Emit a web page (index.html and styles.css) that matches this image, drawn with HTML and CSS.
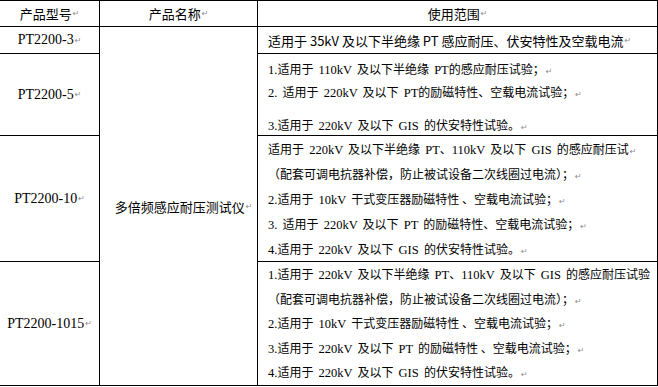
FILE: index.html
```html
<!DOCTYPE html>
<html lang="zh-CN">
<head>
<meta charset="utf-8">
<title>产品型号</title>
<link rel="stylesheet" href="styles.css">
</head>
<body>
<div class="spec">
  <div class="cell head">产品型号<span class="pm">↵</span></div>
  <div class="cell head">产品名称<span class="pm">↵</span></div>
  <div class="cell head">使用范围<span class="pm">↵</span></div>

  <div class="cell model">PT2200-3<span class="pm">↵</span></div>
  <div class="cell name">多倍频感应耐压测试仪<span class="pm">↵</span></div>
  <div class="cell uses single">适用于 35kV 及以下半绝缘 PT 感应耐压、伏安特性及空载电流<span class="pm">↵</span></div>

  <div class="cell model">PT2200-5<span class="pm">↵</span></div>
  <div class="cell uses r2">
    <div class="line"><span class="en">1.</span>适用于<span class="en"> 110kV </span>及以下半绝缘<span class="en"> PT</span>的感应耐压试验；<span class="pm">↵</span></div>
    <div class="line"><span class="en">2. </span>适用于<span class="en"> 220kV </span>及以下<span class="en"> PT</span>的励磁特性、空载电流试验；<span class="pm">↵</span></div>
    <div class="blank"></div>
    <div class="line"><span class="en">3.</span>适用于<span class="en"> 220kV </span>及以下<span class="en"> GIS </span>的伏安特性试验。<span class="pm">↵</span></div>
  </div>

  <div class="cell model">PT2200-10<span class="pm">↵</span></div>
  <div class="cell uses r3">
    <div class="line">适用于<span class="en"> 220kV </span>及以下半绝缘<span class="en"> PT</span>、<span class="en">110kV </span>及以下<span class="en"> GIS </span>的感应耐压试<span class="pm">↵</span></div>
    <div class="line">（配套可调电抗器补偿，防止被试设备二次线圈过电流）；<span class="pm">↵</span></div>
    <div class="line"><span class="en">2.</span>适用于<span class="en"> 10kV </span>干式变压器励磁特性 、空载电流试验；<span class="pm">↵</span></div>
    <div class="line"><span class="en">3. </span>适用于<span class="en"> 220kV </span>及以下<span class="en"> PT </span>的励磁特性、空载电流试验；<span class="pm">↵</span></div>
    <div class="line"><span class="en">4.</span>适用于<span class="en"> 220kV </span>及以下<span class="en"> GIS </span>的伏安特性试验。<span class="pm">↵</span></div>
  </div>

  <div class="cell model">PT2200-1015<span class="pm">↵</span></div>
  <div class="cell uses r4">
    <div class="line"><span class="en">1.</span>适用于<span class="en"> 220kV </span>及以下半绝缘<span class="en"> PT</span>、<span class="en">110kV </span>及以下<span class="en"> GIS </span>的感应耐压试验</div>
    <div class="line">（配套可调电抗器补偿，防止被试设备二次线圈过电流）；<span class="pm">↵</span></div>
    <div class="line"><span class="en">2.</span>适用于<span class="en"> 10kV </span>干式变压器励磁特性 、空载电流试验；<span class="pm">↵</span></div>
    <div class="line"><span class="en">3.</span>适用于<span class="en"> 220kV </span>及以下<span class="en"> PT </span>的励磁特性 、空载电流试验；<span class="pm">↵</span></div>
    <div class="line"><span class="en">4.</span>适用于<span class="en"> 220kV </span>及以下<span class="en"> GIS </span>的伏安特性试验。<span class="pm">↵</span></div>
  </div>
</div>
</body>
</html>
```

FILE: styles.css
```css
html, body {
  margin: 0;
  padding: 0;
  background: #fff;
}

.spec {
  display: grid;
  width: max-content;
  grid-template-columns: 99px 157px 399px;
  grid-template-rows: 25px 26px 81px 125px 123px;
  gap: 1px;
  padding: 1px 1px 1px 0;
  background: #000;
  font-family: "Noto Sans CJK SC", "Noto Sans", sans-serif;
  color: #000;
}

.cell {
  background: #fff;
  overflow: hidden;
  white-space: nowrap;
}

.head {
  display: flex;
  align-items: center;
  justify-content: center;
  font-size: 13px;
}

.model {
  display: flex;
  align-items: center;
  justify-content: center;
  font-family: "Liberation Serif", serif;
  font-size: 14px;
}

.name {
  grid-row: span 4;
  display: flex;
  align-items: center;
  justify-content: center;
  padding-left: 10px;
  font-size: 13px;
}

.uses {
  padding-left: 10px;
  font-size: 12px;
}

.single {
  display: flex;
  align-items: center;
  font-size: 13px;
}

.line {
  height: 25px;
  line-height: 25px;
}

.r2 {
  padding-top: 3px;
}

.r2 .line {
  height: 23px;
  line-height: 23px;
}

.r2 .blank {
  height: 10px;
}

.r4 .line {
  height: 24.6px;
  line-height: 24.6px;
}

.en {
  font-family: "Liberation Serif", serif;
  font-size: 12.5px;
  word-spacing: 2px;
}

.pm {
  font-family: "DejaVu Sans", sans-serif;
  font-size: 8px;
  color: #8c8c8c;
  margin-left: 1px;
}
```
